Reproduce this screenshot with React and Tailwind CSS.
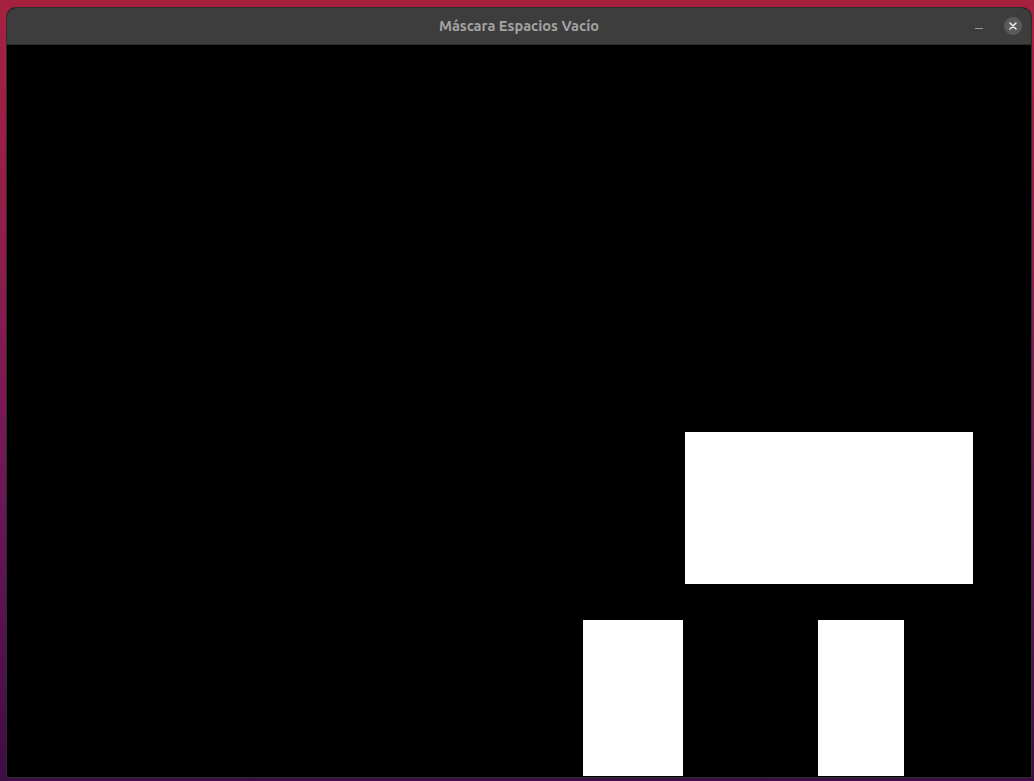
export default function App() {
  return (
    <div className="w-[1034px] h-[781px] overflow-hidden bg-[linear-gradient(180deg,#a6213e_0%,#8c1d4e_35%,#6a1657_65%,#3f0c46_100%)] pt-[7px] pl-[6px]">
      <div className="w-[1026px] h-[771px] flex flex-col rounded-t-[10px] border border-[#2c2c2c] overflow-hidden bg-black">
        <div className="relative h-[37px] shrink-0 flex items-center justify-center bg-[#3d3d3d] border-b border-[#2a2a2a]">
          <span className="text-[14.6px] font-bold text-[#a3a3a3] font-['Ubuntu','Noto_Sans',sans-serif]">
            Máscara Espacios Vacío
          </span>
          <div className="absolute right-[9px] top-[9px] flex items-center gap-[21px]">
            <div className="w-[8px] h-px bg-[#9a9a9a] mt-[4px]" />
            <div className="w-[18px] h-[18px] rounded-full bg-[#5a5a5a] flex items-center justify-center">
              <svg width="8" height="8" viewBox="0 0 8 8">
                <path d="M1 1L7 7M7 1L1 7" stroke="#e8e8e8" strokeWidth="1.6" strokeLinecap="round" />
              </svg>
            </div>
          </div>
        </div>
        <div className="flex-1">
          <svg width="1024" height="732" viewBox="0 0 1024 732" className="block">
            <rect width="1024" height="732" fill="#000" />
            <rect x="678" y="387" width="288" height="152" fill="#fff" />
            <rect x="576" y="575" width="100" height="156" fill="#fff" />
            <rect x="811" y="575" width="86" height="156" fill="#fff" />
          </svg>
        </div>
      </div>
    </div>
  );
}
